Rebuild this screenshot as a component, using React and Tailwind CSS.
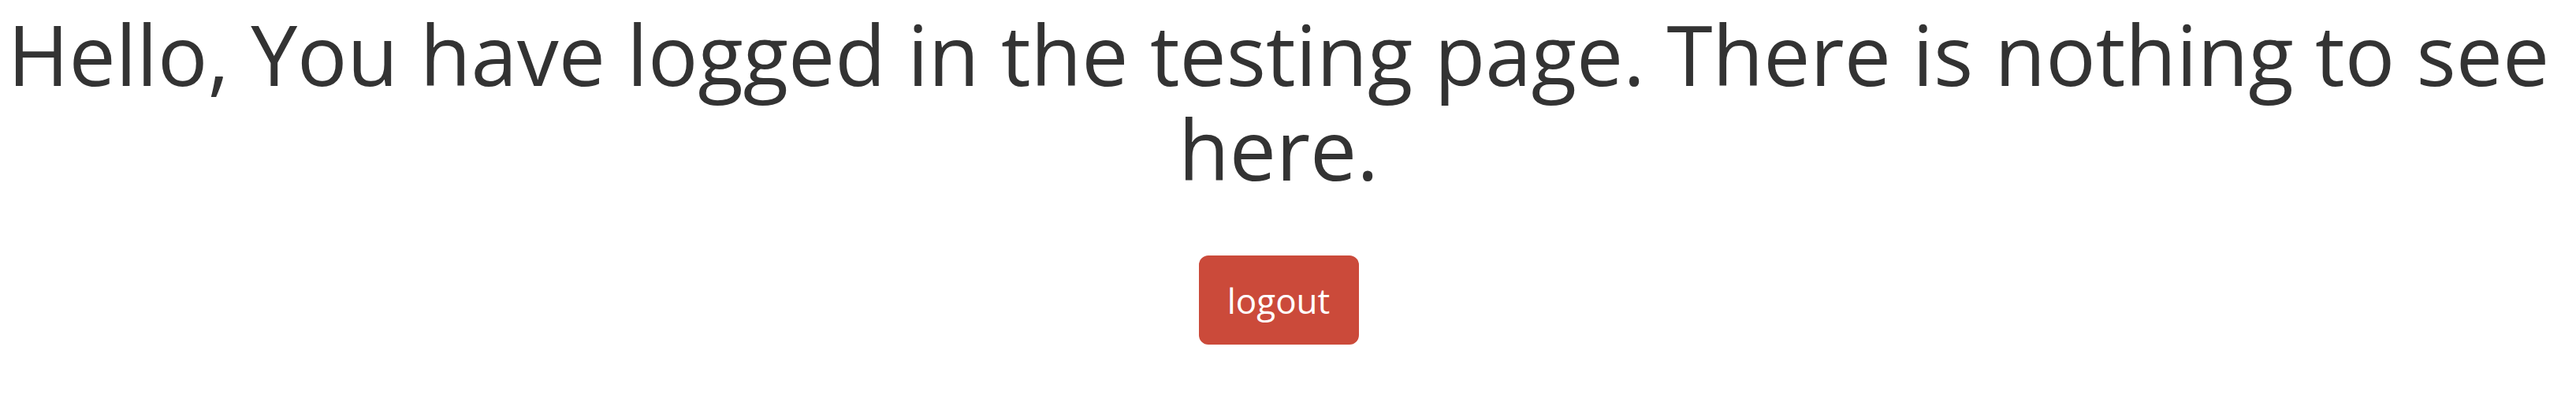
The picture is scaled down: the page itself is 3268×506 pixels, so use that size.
import React from "react";

const App = () => {
  return (
    <div className="w-full min-h-[506px] bg-white pr-[24px] flex flex-col items-center font-['Open_Sans',sans-serif] text-[#333333]">
      <h1 className="pt-2 text-center text-[105.5px] leading-[120px] font-normal">
        Hello, You have logged in the testing page. There is nothing to see
        here.
      </h1>
      <button className="mt-[76px] w-[203px] h-[113px] rounded-xl bg-[#cb4a3a] text-white text-[44px]">
        logout
      </button>
    </div>
  );
};

export default App;
